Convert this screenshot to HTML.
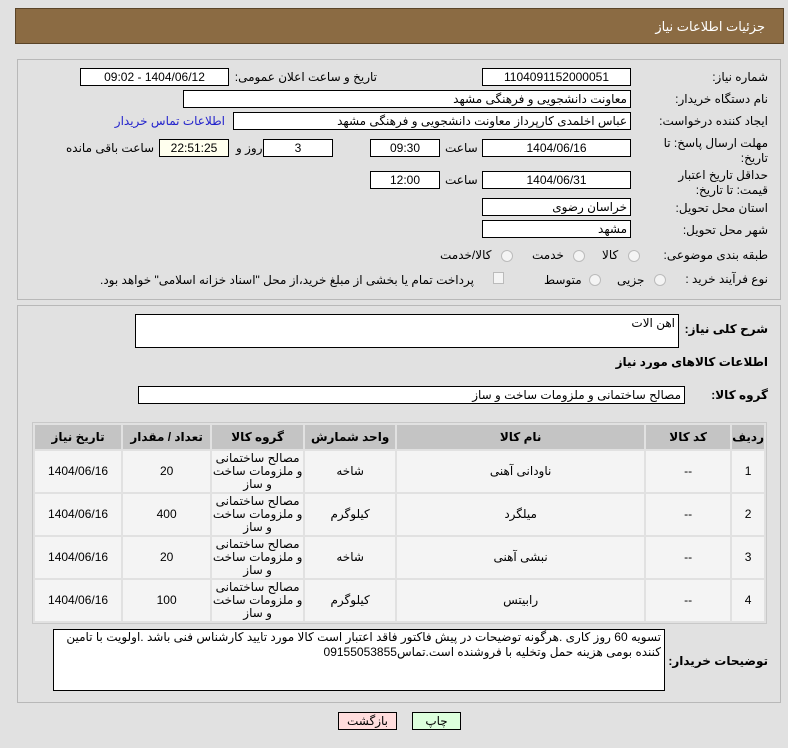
<!DOCTYPE html>
<html><head><meta charset="utf-8"><style>
*{box-sizing:border-box;margin:0;padding:0}
body{width:788px;height:748px;background:#e1e1e1;font-family:"Liberation Sans","DejaVu Sans",sans-serif;font-size:12px;color:#000;position:relative;overflow:hidden}
.a{position:absolute;white-space:nowrap}
.hdr{left:15px;top:8px;width:769px;height:36px;background:#8b6b43;border:1px solid #5a4428}
.hdr span{position:absolute;right:18px;top:10px;color:#fff;font-size:13px}
.pan{border:1px solid #b8b8b8;background:#e1e1e1}
.box{position:absolute;background:#fff;border:1px solid #000;height:18px;font-size:12px;line-height:16px;text-align:center;direction:rtl}
.l{position:absolute;font-size:12px;direction:rtl;white-space:nowrap;z-index:2}
.r{text-align:right;padding-right:3px}
.rad{position:absolute;width:12px;height:12px;border-radius:50%;border:1px solid #bbb;background:#f4f4f4}
table{position:absolute;left:32px;top:422px;width:735px;border-collapse:separate;border-spacing:2px;direction:rtl;background:#e1e1e1;border:1px solid #c8c8c8}
th{background:#c4c4c4;height:24px;font-size:12px}
td{background:#f4f4f4;height:41px;text-align:center;font-size:12px;line-height:13px}
</style></head><body>
<div class="a hdr"><span>جزئیات اطلاعات نیاز</span></div>
<div class="a pan" style="left:17px;top:59px;width:764px;height:241px"></div>
<div class="l" style="right:20px;top:70px">شماره نیاز:</div>
<div class="box" style="left:482px;top:68px;width:149px">1104091152000051</div>
<div class="l" style="right:411px;top:70px">تاریخ و ساعت اعلان عمومی:</div>
<div class="box" style="left:80px;top:68px;width:149px">1404/06/12 - 09:02</div>
<div class="l" style="right:20px;top:92px">نام دستگاه خریدار:</div>
<div class="box r" style="left:183px;top:90px;width:448px">معاونت دانشجویی و فرهنگی مشهد</div>
<div class="l" style="right:20px;top:114px">ایجاد کننده درخواست:</div>
<div class="box r" style="left:233px;top:112px;width:398px">عباس اخلمدی کارپرداز معاونت دانشجویی و فرهنگی مشهد</div>
<div class="l" style="right:563px;top:114px;color:#2222cc">اطلاعات تماس خریدار</div>
<div class="l" style="right:20px;top:136px;line-height:15px;width:110px;white-space:normal">مهلت ارسال پاسخ: تا تاریخ:</div>
<div class="box" style="left:482px;top:139px;width:149px">1404/06/16</div>
<div class="l" style="left:445px;top:141px">ساعت</div>
<div class="box" style="left:370px;top:139px;width:70px">09:30</div>
<div class="box" style="left:263px;top:139px;width:70px">3</div>
<div class="l" style="left:236px;top:141px">روز و</div>
<div class="box" style="left:159px;top:139px;width:70px;background:#ffffee">22:51:25</div>
<div class="l" style="left:66px;top:141px">ساعت باقی مانده</div>
<div class="l" style="right:20px;top:168px;line-height:15px;width:118px;white-space:normal">حداقل تاریخ اعتبار قیمت: تا تاریخ:</div>
<div class="box" style="left:482px;top:171px;width:149px">1404/06/31</div>
<div class="l" style="left:445px;top:173px">ساعت</div>
<div class="box" style="left:370px;top:171px;width:70px">12:00</div>
<div class="l" style="right:20px;top:201px">استان محل تحویل:</div>
<div class="box r" style="left:482px;top:198px;width:149px">خراسان رضوی</div>
<div class="l" style="right:20px;top:223px">شهر محل تحویل:</div>
<div class="box r" style="left:482px;top:220px;width:149px">مشهد</div>
<div class="l" style="right:20px;top:248px">طبقه بندی موضوعی:</div>
<div class="rad" style="left:628px;top:250px"></div><div class="l" style="left:602px;top:248px">کالا</div>
<div class="rad" style="left:573px;top:250px"></div><div class="l" style="left:532px;top:248px">خدمت</div>
<div class="rad" style="left:501px;top:250px"></div><div class="l" style="left:440px;top:248px">کالا/خدمت</div>
<div class="l" style="right:20px;top:272px">نوع فرآیند خرید :</div>
<div class="rad" style="left:654px;top:274px"></div><div class="l" style="left:617px;top:273px">جزیی</div>
<div class="rad" style="left:589px;top:274px"></div><div class="l" style="left:544px;top:273px">متوسط</div>
<div class="a" style="left:493px;top:272px;width:11px;height:12px;border:1px solid #bbb;background:#f4f4f4"></div>
<div class="l" style="left:100px;top:273px">پرداخت تمام یا بخشی از مبلغ خرید،از محل "اسناد خزانه اسلامی" خواهد بود.</div>

<div class="a pan" style="left:17px;top:305px;width:764px;height:398px"></div>
<div class="l" style="right:20px;top:322px;font-weight:bold;font-size:12px">شرح کلی نیاز:</div>
<div class="box r" style="left:135px;top:314px;width:544px;height:34px;text-align:right;font-size:12px">اهن الات</div>
<div class="l" style="right:20px;top:355px;font-weight:bold">اطلاعات کالاهای مورد نیاز</div>
<div class="l" style="right:20px;top:388px;font-weight:bold">گروه کالا:</div>
<div class="box r" style="left:138px;top:386px;width:547px">مصالح ساختمانی و ملزومات ساخت و ساز</div>
<table>
<tr><th style="width:26px">ردیف</th><th style="width:84px">کد کالا</th><th style="width:247px">نام کالا</th><th style="width:90px">واحد شمارش</th><th style="width:91px">گروه کالا</th><th style="width:87px">تعداد / مقدار</th><th>تاریخ نیاز</th></tr>
<tr><td>1</td><td>--</td><td>ناودانی آهنی</td><td>شاخه</td><td>مصالح ساختمانی و ملزومات ساخت و ساز</td><td>20</td><td>1404/06/16</td></tr>
<tr><td>2</td><td>--</td><td>میلگرد</td><td>کیلوگرم</td><td>مصالح ساختمانی و ملزومات ساخت و ساز</td><td>400</td><td>1404/06/16</td></tr>
<tr><td>3</td><td>--</td><td>نبشی آهنی</td><td>شاخه</td><td>مصالح ساختمانی و ملزومات ساخت و ساز</td><td>20</td><td>1404/06/16</td></tr>
<tr><td>4</td><td>--</td><td>رابیتس</td><td>کیلوگرم</td><td>مصالح ساختمانی و ملزومات ساخت و ساز</td><td>100</td><td>1404/06/16</td></tr>
</table>
<div class="l" style="right:20px;top:654px;font-weight:bold">توضیحات خریدار:</div>
<div class="box r" style="left:53px;top:629px;width:612px;height:62px;text-align:right;white-space:normal;font-size:12px;line-height:15px">تسویه 60 روز کاری .هرگونه توضیحات در پیش فاکتور فاقد اعتبار است کالا مورد تایید کارشناس فنی باشد .اولویت با تامین کننده بومی هزینه حمل وتخلیه با فروشنده است.تماس09155053855</div>
<div class="box" style="left:338px;top:712px;width:59px;background:#ffdddd;line-height:16px">بازگشت</div>
<div class="box" style="left:412px;top:712px;width:49px;background:#ddffdd;line-height:16px">چاپ</div>
</body></html>
